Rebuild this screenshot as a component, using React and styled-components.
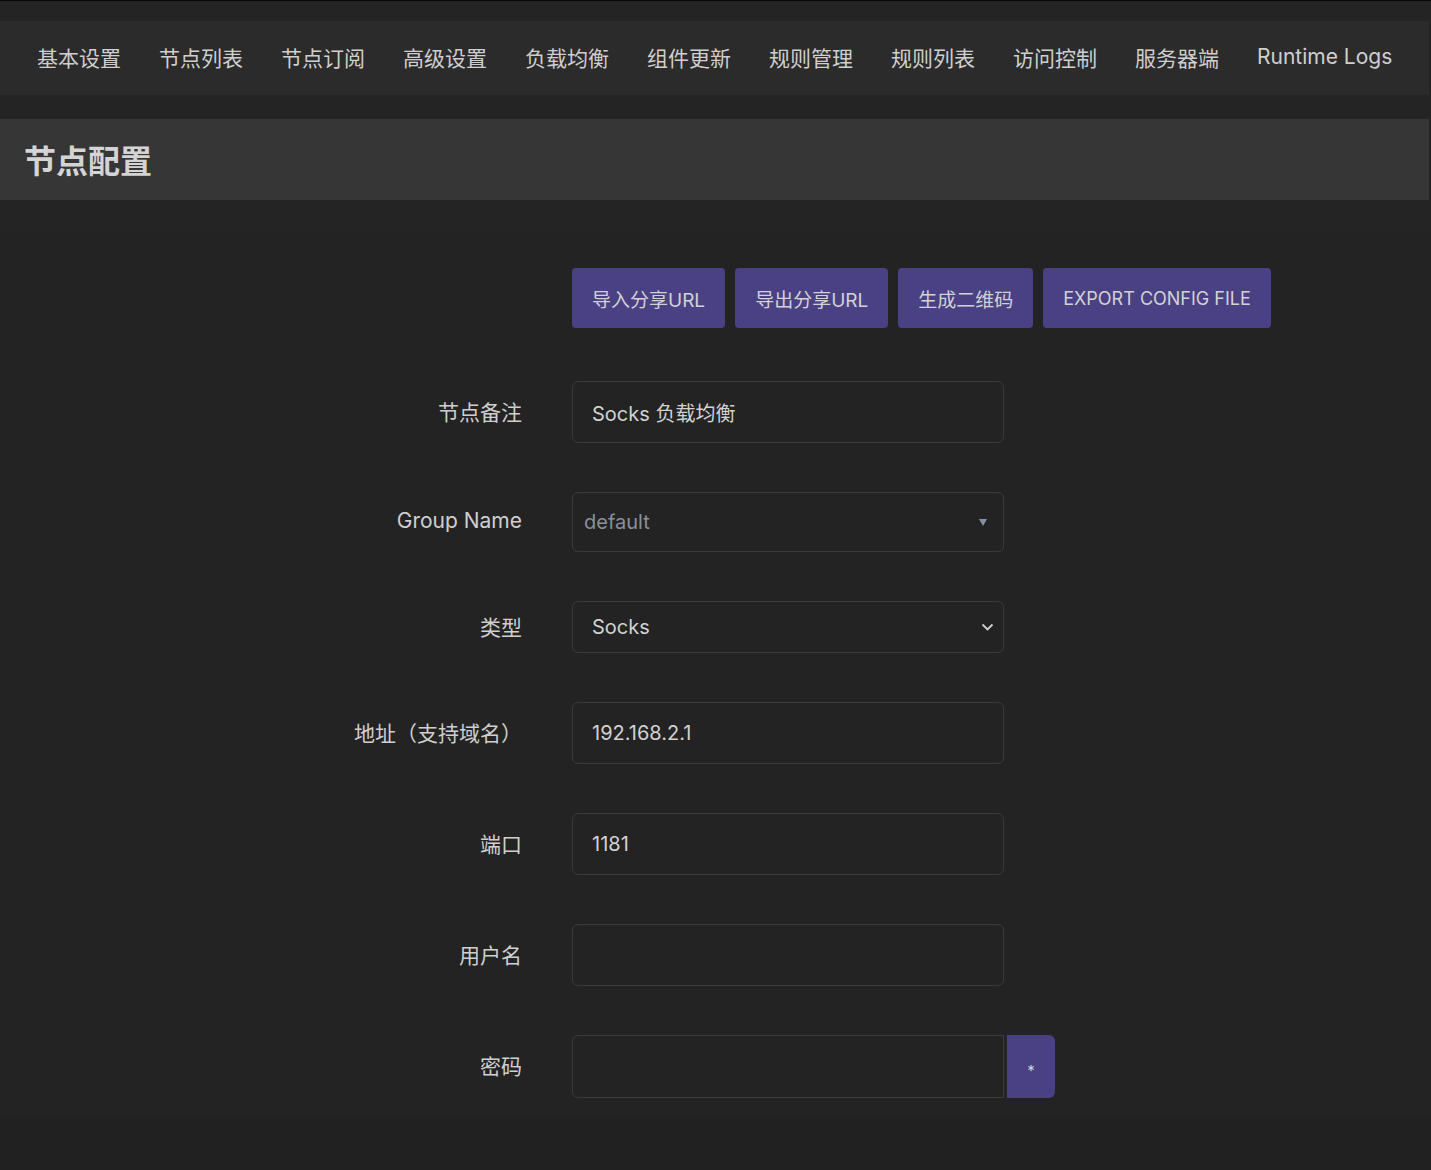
import React from "react";
import styled, { createGlobalStyle } from "styled-components";

const GlobalStyle = createGlobalStyle`
  html, body {
    margin: 0;
    padding: 0;
    background-color: #212121;
    font-family: "Inter", "Noto Sans CJK SC", sans-serif;
    color: #cfcfcf;
  }
`;

const Page = styled.div`
  min-height: 1170px;
  background-color: #212121;
`;

const Header = styled.header`
  border-top: 1px solid #050505;
  background-color: #242424;
  padding-bottom: 30px;
`;

const NavBar = styled.nav`
  margin: 20px 2px 0 0;
  height: 74px;
  background-color: #2b2b2b;
  display: flex;
  align-items: center;
  padding: 0 0 3px 18px;
  box-sizing: border-box;
`;

const NavItem = styled.a`
  padding: 0 19px;
  font-size: 21px;
  color: #cfcfcf;
  text-decoration: none;
  white-space: nowrap;
  cursor: pointer;
`;

const TitleBand = styled.div`
  margin: 24px 2px 0 0;
  height: 81px;
  background-color: #363636;
  display: flex;
  align-items: center;
  padding: 0 0 2px 24px;
  box-sizing: border-box;
`;

const Title = styled.h2`
  margin: 0;
  font-size: 32px;
  font-weight: 700;
  color: #d4d4d4;
`;

const Content = styled.div`
  background-color: #232323;
  border-top: 1px solid #262626;
  padding: 37px 0 18px;
`;

const Form = styled.div`
  display: grid;
  grid-template-columns: 522px auto;
  column-gap: 50px;
  row-gap: 49px;
  align-items: center;
`;

const Label = styled.label`
  text-align: right;
  font-size: 21px;
  padding-bottom: 3px;
  color: #cfcfcf;
`;

const ButtonRow = styled.div`
  display: flex;
  gap: 10px;
  margin-bottom: 4px;
`;

const ActionButton = styled.button`
  height: 60px;
  padding: 0 20px;
  border: none;
  border-radius: 4px;
  background-color: #4a4185;
  color: #d2d2d2;
  font-family: inherit;
  font-size: ${(p) => p.size || 19}px;
  cursor: pointer;
`;

const Field = styled.div`
  width: 432px;
  height: ${(p) => p.h || 62}px;
  box-sizing: border-box;
  border: 1px solid #3a3a3a;
  border-radius: ${(p) => (p.square ? "6px 0 0 6px" : "6px")};
  display: flex;
  align-items: center;
  justify-content: space-between;
  padding: 0 ${(p) => p.pr || 19}px 0 ${(p) => p.pl || 19}px;
  font-size: 20px;
  color: ${(p) => (p.muted ? "#8a90a0" : "#d2d2d2")};
`;

const PasswordGroup = styled.div`
  display: flex;
  gap: 3px;
`;

const RevealButton = styled.button`
  width: 48px;
  height: 63px;
  border: none;
  border-radius: 0 6px 6px 0;
  background-color: #4a4185;
  color: #d2d2d2;
  font-family: inherit;
  font-size: 15px;
  padding-top: 8px;
`;

const Caret = styled.span`
  width: 0;
  height: 0;
  border-left: 4px solid transparent;
  border-right: 4px solid transparent;
  border-top: 7px solid #8890a8;
`;

const navItems = [
  "基本设置",
  "节点列表",
  "节点订阅",
  "高级设置",
  "负载均衡",
  "组件更新",
  "规则管理",
  "规则列表",
  "访问控制",
  "服务器端",
  "Runtime Logs",
];

const Chevron = () => (
  <svg width="13" height="8" viewBox="0 0 13 8" fill="none">
    <path d="M1.5 1.5l5 5 5-5" stroke="#d0d0d0" strokeWidth="1.8" />
  </svg>
);

const App = () => {
  return (
    <Page>
      <GlobalStyle />
      <Header>
        <NavBar>
          {navItems.map((item) => (
            <NavItem key={item}>{item}</NavItem>
          ))}
        </NavBar>
        <TitleBand>
          <Title>节点配置</Title>
        </TitleBand>
      </Header>
      <Content>
        <Form>
          <span />
          <ButtonRow>
            <ActionButton>导入分享URL</ActionButton>
            <ActionButton>导出分享URL</ActionButton>
            <ActionButton>生成二维码</ActionButton>
            <ActionButton size={18}>EXPORT CONFIG FILE</ActionButton>
          </ButtonRow>

          <Label>节点备注</Label>
          <Field>Socks 负载均衡</Field>

          <Label>Group Name</Label>
          <Field h={60} pl={11} pr={16} muted>
            default
            <Caret />
          </Field>

          <Label>类型</Label>
          <Field h={52} pr={9}>
            Socks
            <Chevron />
          </Field>

          <Label>地址（支持域名）</Label>
          <Field>192.168.2.1</Field>

          <Label>端口</Label>
          <Field>1181</Field>

          <Label>用户名</Label>
          <Field />

          <Label>密码</Label>
          <PasswordGroup>
            <Field h={63} square />
            <RevealButton>*</RevealButton>
          </PasswordGroup>
        </Form>
      </Content>
    </Page>
  );
};

export default App;
